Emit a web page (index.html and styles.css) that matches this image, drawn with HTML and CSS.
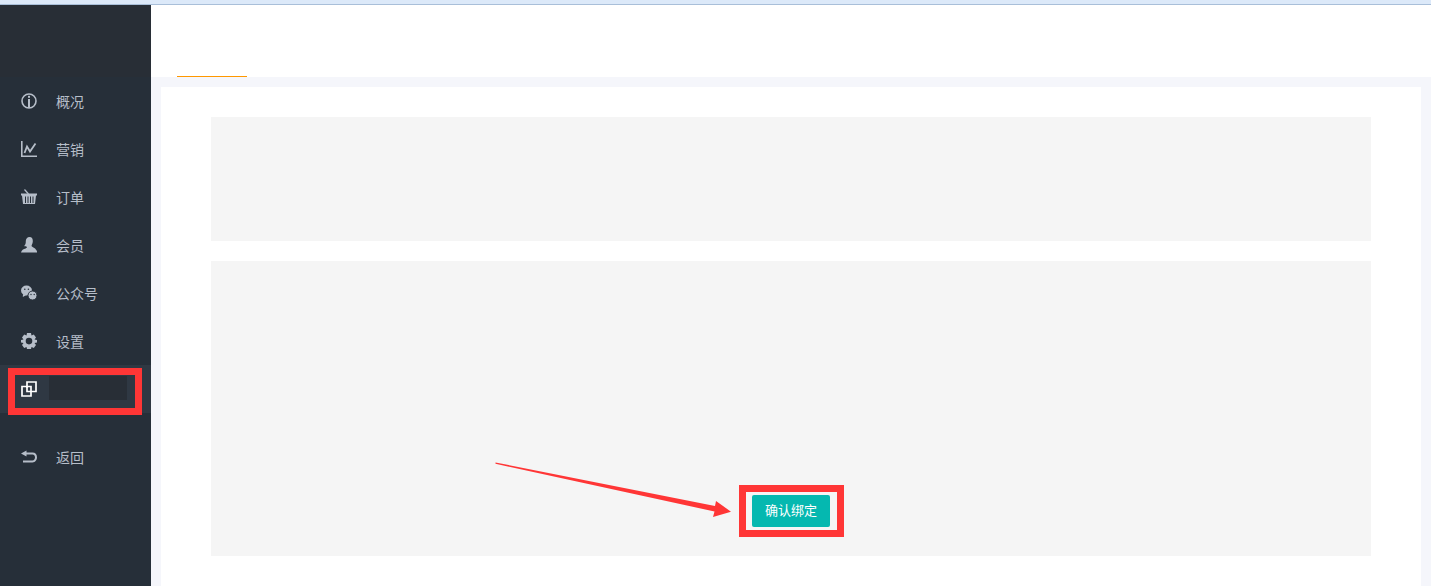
FILE: index.html
```html
<!DOCTYPE html>
<html>
<head>
    <title>确认绑定</title>
    <link rel="stylesheet" href="styles.css">
</head>
<body>
<div class="topline"></div>
<div class="main">
    <div class="sidebar">
        <div class="logo"></div>
        <ul class="menu">
            <li class="item">
                <svg class="icon" viewBox="0 0 16 16"><circle cx="8" cy="8" r="7" fill="none" stroke="currentColor" stroke-width="1.6"/><rect x="7" y="6" width="2" height="9" fill="currentColor"/><rect x="7" y="2.8" width="2" height="2" fill="currentColor"/></svg>
                <span>概况</span>
            </li>
            <li class="item">
                <svg class="icon" viewBox="0 0 16 16"><path d="M0.800 0V15.200H16" fill="none" stroke="currentColor" stroke-width="1.600"/><path d="M3.500 12L6 5.500L9 10.500L14.500 2.500" fill="none" stroke="currentColor" stroke-width="1.800"/></svg>
                <span>营销</span>
            </li>
            <li class="item">
                <svg class="icon" viewBox="0 0 16 16"><path d="M3.500 0.500L7.500 5" fill="none" stroke="currentColor" stroke-width="1.200"/><path d="M0 4.500H16V6.500H15L14 15H2L1 6.500H0Z" fill="currentColor"/><path d="M4.500 7.500V14M7 7.500V14M9.500 7.500V14M12 7.500V14" stroke="#262f39" stroke-width="1"/></svg>
                <span>订单</span>
            </li>
            <li class="item">
                <svg class="icon" viewBox="0 0 16 16"><path d="M8.500 0C11 0 12 2 11.800 4.500C11.600 6.500 10.800 7.800 10.500 9C11.500 10.500 15 11 16 14.500V15.500H0C0.500 13 2.500 12 4.500 11.500L6 10C5 9.300 4 9.500 3 9C4.500 8 4.800 6.500 4.800 4C4.800 1.800 6.300 0 8.500 0Z" fill="currentColor"/><path d="M0.500 9.500C2 10.500 4 11 5.500 10.500" fill="none" stroke="#262f39" stroke-width="1"/></svg>
                <span>会员</span>
            </li>
            <li class="item">
                <svg class="icon" viewBox="0 0 16 16"><ellipse cx="5.500" cy="5.500" rx="5.500" ry="5" fill="currentColor"/><path d="M2 9L1.800 12L5.500 10Z" fill="currentColor"/><circle cx="11.500" cy="10.500" r="4.500" fill="currentColor" stroke="#262f39" stroke-width="1"/><circle cx="3.800" cy="4.200" r="0.800" fill="#262f39"/><circle cx="7.400" cy="4.200" r="0.800" fill="#262f39"/><circle cx="10" cy="9.500" r="0.700" fill="#262f39"/><circle cx="13.200" cy="9.500" r="0.700" fill="#262f39"/></svg>
                <span>公众号</span>
            </li>
            <li class="item">
                <svg class="icon" viewBox="0 0 16 16"><path fill-rule="evenodd" d="M6 0H10L10.500 2.500L12.800 1.500L15 4.500L13.500 6.500L16 7V9.500L13.500 10L15 12L12.800 15L10.500 14L10 16H6L5.500 14L3.200 15L1 12L2.500 10L0 9.500V7L2.500 6.500L1 4.500L3.200 1.500L5.500 2.500ZM8 4.800A3.300 3.300 0 1 0 8 11.400A3.300 3.300 0 1 0 8 4.800Z" fill="currentColor"/></svg>
                <span>设置</span>
            </li>
            <li class="item active">
                <svg class="icon" viewBox="0 0 16 16"><path d="M6 7V1H15V10.500H10" fill="none" stroke="currentColor" stroke-width="1.700"/><path d="M1 5.500H10V15H1Z M6 5.500V10.500H10" fill="none" stroke="currentColor" stroke-width="1.700"/></svg>
                <span class="hidden-name"></span>
            </li>
            <li class="item back">
                <svg class="icon" viewBox="0 0 16 16"><path d="M0 4.500L5.500 1.500V3.500H11.500C14.300 3.500 16 5.500 16 8.300C16 11 14.300 13.500 11.500 13.500H2V11.500H11.500C13 11.500 14 10 14 8.300C14 6.800 13 5.500 11.500 5.500H5.500V7.500Z" fill="currentColor"/></svg>
                <span>返回</span>
            </li>
        </ul>
    </div>
    <div class="content">
        <div class="header"><div class="tab"></div></div>
        <div class="card">
            <div class="panel panel-top"></div>
            <div class="panel panel-bottom">
                <a class="btn">确认绑定</a>
            </div>
        </div>
    </div>
</div>

<!-- red marks drawn over the screenshot -->
<div class="mark mark-menu"></div>
<div class="mark mark-btn"></div>
<svg class="arrow" viewBox="0 0 240 60"><polygon points="0.500,0.500 220,44 221,39 236,49.700 218,55 219.500,49.500 0.500,1.800" fill="#ff3636"/></svg>
</body>
</html>
```

FILE: styles.css
```css
* {
    box-sizing: border-box;
}

html, body {
    margin: 0;
    height: 100%;
    overflow: hidden;
}

body {
    position: relative;
    display: flex;
    flex-direction: column;
    font-family: "Liberation Sans", "Noto Sans CJK SC", sans-serif;
    background-color: #f5f6fb;
}

.topline {
    height: 5px;
    background-color: #dce9f9;
    border-bottom: 1px solid #a9bfd9;
}

.main {
    flex: 1;
    display: flex;
    min-height: 0;
}

.sidebar {
    width: 151px;
    background-color: #262f39;
}

.logo {
    height: 72px;
    background-color: #282e36;
}

.menu {
    list-style: none;
    margin: 0;
    padding: 0;
}

.item {
    display: flex;
    align-items: center;
    height: 48px;
    padding-left: 21px;
    font-size: 14px;
    color: #b6bec9;
}

.icon {
    width: 16px;
    height: 16px;
    margin-right: 19px;
    flex-shrink: 0;
}

.active {
    background-color: #2f3843;
    color: #ffffff;
}

.active .icon {
    margin-right: 12px;
}

.hidden-name {
    width: 78px;
    height: 24px;
    margin-top: -2px;
    background-color: #282e36;
}

.back {
    margin-top: 20px;
}

.content {
    flex: 1;
    display: flex;
    flex-direction: column;
    min-width: 0;
}

.header {
    height: 72px;
    flex-shrink: 0;
    display: flex;
    align-items: flex-end;
    padding-left: 26px;
    background-color: #ffffff;
}

.tab {
    width: 70px;
    height: 1px;
    background-color: #ff9800;
}

.card {
    flex: 1;
    margin: 10px 10px 0;
    padding: 30px 50px;
    background-color: #ffffff;
}

.panel {
    background-color: #f5f5f5;
}

.panel-top {
    height: 124px;
    margin-bottom: 20px;
}

.panel-bottom {
    height: 295px;
    display: flex;
    flex-direction: column;
    align-items: flex-start;
    justify-content: flex-end;
    padding: 0 0 29px 541px;
}

.btn {
    display: block;
    width: 78px;
    height: 32px;
    line-height: 32px;
    text-align: center;
    font-size: 13px;
    color: #ffffff;
    background-color: #05b8b0;
    border-radius: 2px;
}

.mark {
    position: absolute;
    border: 7px solid #ff3636;
}

.mark-menu {
    left: 8px;
    top: 368px;
    width: 134px;
    height: 47px;
}

.mark-btn {
    left: 739px;
    top: 485px;
    width: 105px;
    height: 52px;
}

.arrow {
    position: absolute;
    left: 495px;
    top: 462px;
    width: 240px;
    height: 60px;
}
```
